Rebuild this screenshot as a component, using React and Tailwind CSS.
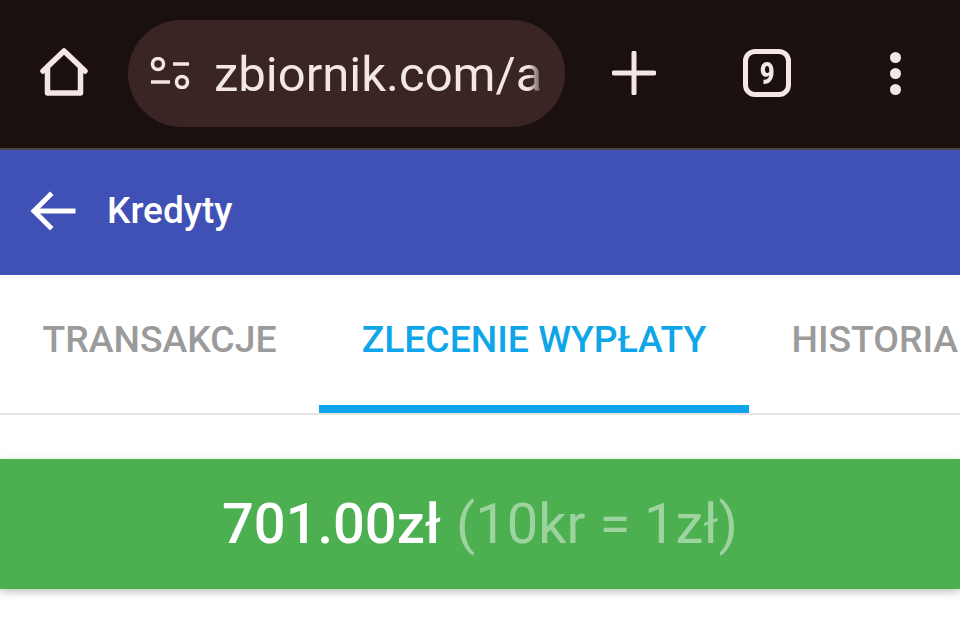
import React from "react";

const HomeIcon = () => (
  <svg width="52" height="50" viewBox="0 0 52 50" fill="none" stroke="#f3e6e4" strokeWidth="5.5" strokeLinecap="round" strokeLinejoin="round">
    <path d="M5 23 L26 3 L47 23" />
    <path d="M9.5 20 V45 H42.5 V20" />
  </svg>
);

const SiteIcon = () => (
  <svg width="40" height="32" viewBox="0 0 40 32" fill="none" stroke="#f3e6e4" strokeWidth="3.5">
    <circle cx="8" cy="7" r="5.5" />
    <path d="M23 7 H39" />
    <path d="M1 25 H20" />
    <circle cx="32" cy="25" r="5.5" />
  </svg>
);

const PlusIcon = () => (
  <svg width="44" height="44" viewBox="0 0 44 44" fill="none" stroke="#f3e6e4" strokeWidth="5" strokeLinecap="round">
    <path d="M22 2 V42" />
    <path d="M2 22 H42" />
  </svg>
);

const BackIcon = () => (
  <svg width="46" height="40" viewBox="0 0 46 40" fill="none" stroke="#ffffff" strokeWidth="5" strokeLinecap="square">
    <path d="M43 20 H6" />
    <path d="M20 4 L4 20 L20 36" />
  </svg>
);

const Tab = ({ label, active }) => (
  <div className={`relative shrink-0 h-full flex items-center px-[42.6px] pb-[8px] text-[37.3px] font-medium whitespace-nowrap ${active ? "text-[#0ea5e9]" : "text-[#9b9b9b]"}`}>
    {label}
    {active && <div className="absolute left-0 right-0 bottom-0 h-[8px] bg-[#0ea5ee]" />}
  </div>
);

export default function App() {
  return (
    <div className="w-[960px] h-[639px] overflow-hidden bg-white font-['Roboto',sans-serif]">

      {/* BROWSER BAR */}
      <div className="h-[150px] bg-[#1b1010] border-b-2 border-[#4a4446] flex items-center pb-[2px]">
        <div className="w-[128px] flex justify-center">
          <HomeIcon />
        </div>
        <div className="w-[437px] h-[107px] rounded-[54px] bg-[#3a2524] flex items-center pl-[22px] pr-[20px] gap-[24px]">
          <SiteIcon />
          <div className="flex-1 overflow-hidden whitespace-nowrap pt-[3px] text-[49px] text-[#f3e6e4] [mask-image:linear-gradient(to_right,black_95%,transparent_100%)]">
            zbiornik.com/admin
          </div>
        </div>
        <div className="flex-1 flex items-center">
          <div className="w-[138px] flex justify-center"><PlusIcon /></div>
          <div className="w-[128px] flex justify-center">
            <div className="w-[48px] h-[48px] rounded-[12px] border-[5px] border-[#f3e6e4] flex items-center justify-center text-[32px] font-black text-[#f3e6e4]">
              <span className="scale-x-[0.8]">9</span>
            </div>
          </div>
          <div className="flex-1 flex flex-col items-center gap-[5px]">
            <div className="w-[11px] h-[11px] rounded-full bg-[#f3e6e4]" />
            <div className="w-[11px] h-[11px] rounded-full bg-[#f3e6e4]" />
            <div className="w-[11px] h-[11px] rounded-full bg-[#f3e6e4]" />
          </div>
        </div>
      </div>

      {/* HEADER */}
      <div className="h-[125px] bg-[#3f51b5] flex items-center pl-[30px] gap-[31px] pb-[3px]">
        <BackIcon />
        <div className="text-[37px] font-medium text-white">Kredyty</div>
      </div>

      {/* TABS */}
      <div className="h-[140px] border-b-2 border-[#e5e5e5] flex overflow-hidden">
        <Tab label="TRANSAKCJE" />
        <Tab label="ZLECENIE WYPŁATY" active />
        <Tab label="HISTORIA" />
      </div>

      {/* BALANCE */}
      <div className="mt-[44px] h-[130px] bg-[#4caf50] shadow-[0_3px_8px_rgba(0,0,0,0.25)] flex items-center justify-center gap-[15px] text-[56px]">
        <span className="font-medium text-white">701.00zł</span>
        <span className="text-white/45">(10kr = 1zł)</span>
      </div>

    </div>
  );
}
